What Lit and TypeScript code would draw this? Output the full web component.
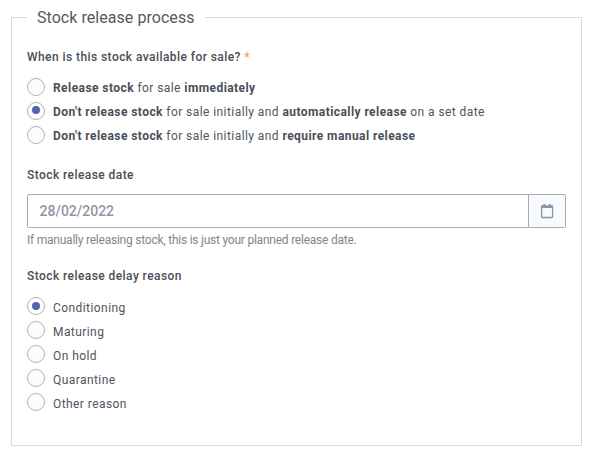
import { LitElement, html, css } from "lit";
import { customElement, property } from "lit/decorators.js";

@customElement("radio-option")
class RadioOption extends LitElement {
  @property({ type: Boolean }) checked = false;

  static styles = css`
    :host { display: flex; align-items: center; height: 24px; }
    .ring {
      box-sizing: border-box; flex: none; width: 18px; height: 18px;
      border: 1px solid #b0b2b5; border-radius: 50%; background: #fbfcfe;
      display: flex; align-items: center; justify-content: center;
    }
    .ring.on { background: #fff; }
    .dot { width: 8px; height: 8px; margin-bottom: var(--dot-lift, 0); border-radius: 50%; background: #4c69ae; }
    .text { margin-left: 8px; padding-top: var(--text-drop, 1px); line-height: 18px; white-space: nowrap; }
  `;

  render() {
    return html`
      <span class="ring ${this.checked ? "on" : ""}" role="radio" aria-checked=${this.checked}>
        ${this.checked ? html`<span class="dot"></span>` : null}
      </span>
      <span class="text"><slot></slot></span>
    `;
  }
}

@customElement("app-root")
class AppRoot extends LitElement {
  static styles = css`
    :host {
      display: block; box-sizing: border-box; height: 458px; padding: 8px 9px 0 11px;
      background: #fff; color: #50545c; overflow: hidden;
      font: 400 12px/18px Roboto, sans-serif; letter-spacing: 0.43px;
    }
    fieldset {
      box-sizing: border-box; height: 438px; margin: 0; min-width: 0;
      padding: 21px 15px 0; border: 1px solid #d9dadc;
    }
    legend { padding: 0 10px; font-size: 16px; line-height: 19px; letter-spacing: 0.05px; color: #555960; }
    .label { font-weight: 500; height: 18px; color: #4a4e56; }
    .star { color: #f6a13c; }
    .release { margin-top: 9px; --dot-lift: 2px; }
    .reasons { margin-top: 9px; --text-drop: 4px; }
    .date-label { margin-top: 19px; }
    .reason-label { margin-top: 18px; }
    b { font-weight: 700; color: #4a4e56; }
    .field {
      box-sizing: border-box; display: flex; height: 34px; margin-top: 10px;
      border: 1px solid #a9abae; border-radius: 2px; overflow: hidden;
    }
    .value {
      flex: 1; padding-left: 11.5px; font-size: 14px; line-height: 33px; font-weight: 500;
      color: #8e96a5; letter-spacing: 0;
    }
    .button {
      width: 36px; border-left: 1px solid #a9abae; background: #f8fafd;
      display: flex; align-items: center; justify-content: center;
    }
    .help { margin-top: 3px; color: #81878c; letter-spacing: -0.23px; }
  `;

  render() {
    return html`
      <fieldset>
        <legend>Stock release process</legend>
        <div class="label">When is this stock available for sale? <span class="star">*</span></div>
        <div class="release">
          <radio-option><b>Release stock</b> for sale <b>immediately</b></radio-option>
          <radio-option checked><b>Don't release stock</b> for sale initially and <b>automatically release</b> on a set date</radio-option>
          <radio-option><b>Don't release stock</b> for sale initially and <b>require manual release</b></radio-option>
        </div>
        <div class="label date-label">Stock release date</div>
        <div class="field">
          <div class="value">28/02/2022</div>
          <div class="button">
            <svg width="14" height="16" viewBox="0 0 14 16" fill="none" stroke="#8b93a6">
              <rect x="1.6" y="3.1" width="11" height="11.4" rx="0.7" stroke-width="1.3" />
              <path d="M1.3 3.8h11.6" stroke-width="2.4" />
              <path d="M4.3 1v3M9.9 1v3" stroke-width="1.8" />
            </svg>
          </div>
        </div>
        <div class="help">If manually releasing stock, this is just your planned release date.</div>
        <div class="label reason-label">Stock release delay reason</div>
        <div class="reasons">
          ${["Conditioning", "Maturing", "On hold", "Quarantine", "Other reason"].map(
            (name, i) => html`<radio-option ?checked=${i === 0}>${name}</radio-option>`
          )}
        </div>
      </fieldset>
    `;
  }
}
